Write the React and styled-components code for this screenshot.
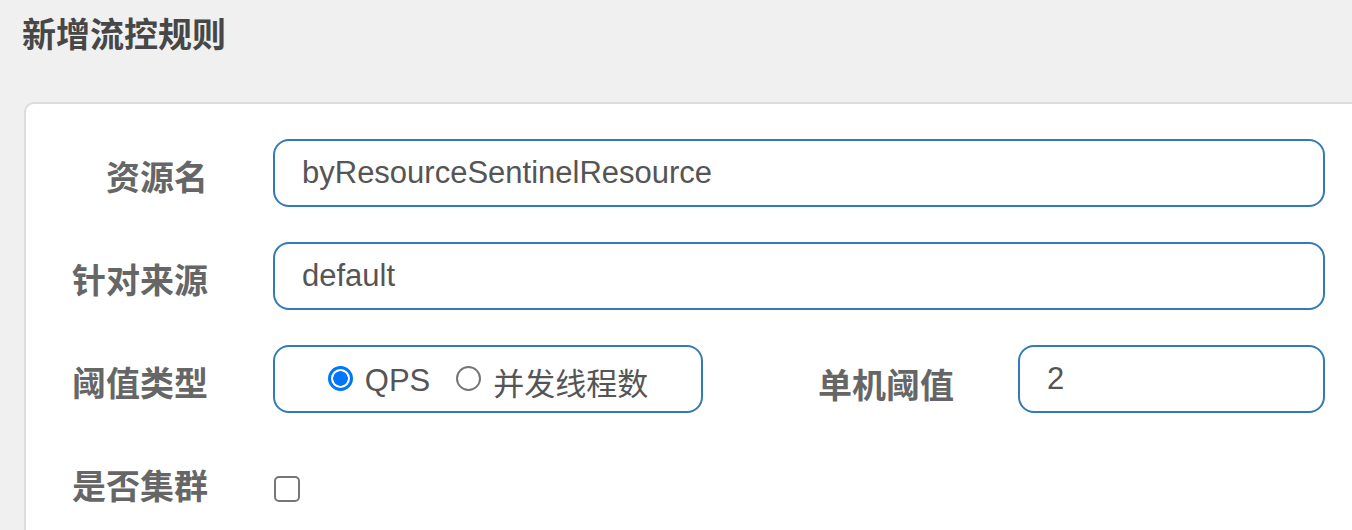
import styled, { createGlobalStyle } from "styled-components";

const GlobalStyle = createGlobalStyle`
  html, body {
    margin: 0;
    padding: 0;
    background-color: #f0f0f0;
    overflow: hidden;
  }
  body {
    font-family: "Liberation Sans", "Noto Sans CJK SC", sans-serif;
  }
`;

const Page = styled.div`
  width: 1352px;
  height: 530px;
  overflow: hidden;
`;

const Title = styled.h3`
  margin: 0;
  padding: 16px 0 0 22px;
  font-family: "Noto Sans CJK SC", sans-serif;
  font-size: 34px;
  line-height: 34px;
  font-weight: 700;
  color: #474747;
`;

const Card = styled.div`
  box-sizing: border-box;
  width: 1360px;
  margin: 52px 0 0 24px;
  padding: 35px 57px 40px 0;
  background-color: #fff;
  border: 2px solid #dcdcdc;
  border-radius: 10px;
  display: flex;
  flex-direction: column;
  gap: 35px;
`;

const Row = styled.div`
  display: flex;
  align-items: flex-start;
  min-height: 68px;
`;

const Label = styled.label`
  box-sizing: border-box;
  flex: none;
  width: ${(p) => p.$width || 182}px;
  margin-right: ${(p) => (p.$width ? 64 : 65)}px;
  padding-top: ${(p) => p.$top || 20}px;
  text-align: right;
  font-family: "Noto Sans CJK SC", sans-serif;
  font-size: 34px;
  line-height: 34px;
  font-weight: 700;
  color: #666;
`;

const TextInput = styled.input`
  box-sizing: border-box;
  flex: 1;
  min-width: 0;
  height: 68px;
  padding: 0 27px;
  border: 2px solid #337ab7;
  border-radius: 16px;
  outline: none;
  background: #fff;
  font-family: "Liberation Sans", "Noto Sans CJK SC", sans-serif;
  font-size: 31px;
  color: #555;
`;

const RadioBox = styled.div`
  box-sizing: border-box;
  flex: none;
  width: 430px;
  height: 68px;
  border: 2px solid #337ab7;
  border-radius: 16px;
  display: flex;
  align-items: center;
  justify-content: center;
  gap: 26px;
`;

const RadioOption = styled.label`
  display: flex;
  align-items: center;
  gap: 12px;
  font-family: "Liberation Sans", "Noto Sans CJK SC", sans-serif;
  font-size: 31px;
  color: #555;
  padding-top: 4px;
`;

const Radio = styled.input`
  appearance: none;
  box-sizing: border-box;
  width: 25px;
  height: 25px;
  margin: 0 0 5px 0;
  border: 2px solid #767676;
  border-radius: 50%;
  background: #fff;

  &:checked {
    border: 3px solid #0075ff;
    background: radial-gradient(circle, #0075ff 0 7px, #fff 7.5px);
  }
`;

const Checkbox = styled.input`
  appearance: none;
  box-sizing: border-box;
  width: 26px;
  height: 26px;
  margin: 28px 0 0 1px;
  border: 2px solid #767676;
  border-radius: 5px;
  background: #fff;
`;

export default function App() {
  return (
    <Page>
      <GlobalStyle />
      <Title>新增流控规则</Title>
      <Card>
        <Row>
          <Label>资源名</Label>
          <TextInput defaultValue="byResourceSentinelResource" />
        </Row>
        <Row>
          <Label>针对来源</Label>
          <TextInput defaultValue="default" />
        </Row>
        <Row>
          <Label>阈值类型</Label>
          <RadioBox>
            <RadioOption>
              <Radio type="radio" name="grade" defaultChecked />
              QPS
            </RadioOption>
            <RadioOption>
              <Radio type="radio" name="grade" />
              并发线程数
            </RadioOption>
          </RadioBox>
          <Label $width={251} $top={22}>单机阈值</Label>
          <TextInput defaultValue="2" />
        </Row>
        <Row>
          <Label>是否集群</Label>
          <Checkbox type="checkbox" />
        </Row>
      </Card>
    </Page>
  );
}
